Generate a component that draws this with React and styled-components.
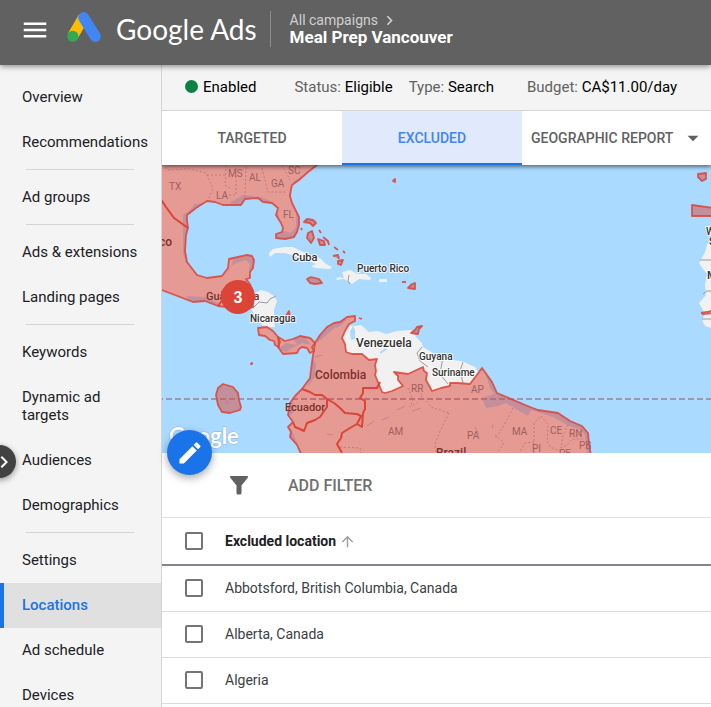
import React, { useState } from 'react';
import styled, { createGlobalStyle } from 'styled-components';
import { MdEdit, MdArrowUpward, MdChevronRight, MdArrowDropDown, MdMenu } from 'react-icons/md';

const navGroups = [
  ['Overview', 'Recommendations'],
  ['Ad groups'],
  ['Ads & extensions', 'Landing pages'],
  ['Keywords', 'Dynamic ad targets', 'Audiences', 'Demographics'],
  ['Settings', 'Locations', 'Ad schedule', 'Devices'],
];

const locations = [
  'Abbotsford, British Columbia, Canada',
  'Alberta, Canada',
  'Algeria',
];

const northAmerica =
  'M-3 -3H158L155 0L146 7L137 15L130 20L129 24L128 31L130 38L134 46L137 52L137 60L135 67L132 72L123 74L114 73L114 69L120 67L121 63L119 58L114 50L116 43L110 38L101 37L96 33L83 34L79 40L61 40L53 37L45 36L34 43L25 50L25 55L26 63L24 70L23 86L25 97L35 110L45 113L60 111L66 103L67 94L85 90L90 91L92 95L91 103L88 107L88 113L84 114L88 119L91 126L91 142L84 145L73 143L56 141L43 136L31 137L18 132L-3 124Z';

const southAmerica =
  'M153 178L158 170L165 162L172 158L178 157L185 152L193 151L193 156L187 159L183 166L180 173L183 179L184 187L190 189L200 189L207 195L215 194L213 200L214 206L213 210L218 222L220 227L223 228L230 226L241 221L236 215L236 211L232 207L246 209L261 202L262 206L265 208L264 215L270 226L279 223L288 221L288 218L295 218L308 219L320 203L330 217L335 228L368 242L376 245L396 248L408 256L420 261L426 268L427 278L429 291H140L135 280L128 272L129 267L126 262L131 257L126 250L128 238L133 231L140 224L148 213L150 197Z';

const costaRica = 'M96 163L105 162L111 166L116 172L117 182L113 180L112 176L108 175L103 171L97 170Z';
const panama = 'M116 172L123 176L131 174L138 171L148 173L153 178L150 182L152 186L148 188L145 183L140 182L137 184L135 188L121 189L116 182L118 177Z';

const whiteLand = [
  'M89 133L93 128L99 125L106 127L112 131L115 136L112 145L112 155L113 162L106 162L100 160L95 153L88 143Z',
  'M180 173L184 163L191 160L188 168L189 175L193 174L193 165L191 161L199 160L207 167L216 166L224 169L235 166L249 165L255 173L260 178L261 182L271 188L277 195L288 195L300 196L313 202L317 208L308 222L288 224L268 230L263 215L259 208L243 222L222 231L211 213L210 197L184 192Z',
  'M107 88L111 84L122 82L131 82L145 89L158 93L164 99L170 102L168 104L153 103L149 101L154 99L139 93L123 88L113 88L108 92Z',
  'M180 107L188 105L196 109L204 109L209 113L208 115L197 114L190 119L182 114L174 115L176 112L182 113Z',
  'M217 114H225V117H217Z',
  'M552 77L545 79L543 87L537 98L541 104L545 109L543 120L544 130L537 138L543 149L540 155L543 161L552 164Z',
];

const shelf = [
  'M25 52L35 45L43 38L33 39L27 46L21 50L21 88L24 98L29 100L27 84L30 70L27 62Z',
  'M67 38L81 30L99 32L108 36L113 45L117 51L114 58L110 42L91 37L80 41Z',
  'M112 76V70L123 66L129 68L134 62V47L138 54L137 73L122 76Z',
  'M129 37L127 29L132 16L155 2L144 11L134 21L131 32Z',
  'M29 139L24 131L44 132L56 138L55 143Z',
  'M90 117L93 97L88 91L71 94L69 103L61 112L70 101L74 98L84 95L88 99L87 107Z',
  'M322 203L328 223L332 229L320 233L324 243L336 241L344 238L359 247L366 251L369 245L391 252L407 261L418 264L423 270L425 290H431L428 267L412 255L397 246L371 241L336 227Z',
  'M116 184L124 187L130 183L140 178L149 180L142 171L131 173L135 180L124 178Z',
  'M126 252L132 247L131 237L127 239ZM128 262L133 273L140 288L135 288L126 269Z',
  'M154 178L160 174L171 164L178 161L186 154L178 155L164 161Z',
  'M149 190L154 199L153 212L145 222L150 207Z',
];

const islands = [
  'M142 57L145 54L151 55L154 58L151 61L148 58ZM146 68L150 66L152 73L149 78L145 73ZM157 65L159 68M156 74L162 76L163 80L158 80ZM161 72L166 76L167 80M172 82L176 85M171 91L176 90L177 94M181 86L183 88M176 96L181 95L179 100L176 99ZM139 63L140 65',
  'M145 114L149 112L157 114L160 118L153 119L148 118Z',
  'M231 16L233 14L233 17ZM240 117L244 117M246 123L250 119L253 118V124Z',
  'M124 151L127 146L128 152L126 155ZM89 199L90 198L90 199Z',
  'M249 168L253 165L255 162L260 161L257 164L256 169Z',
  'M197 153L200 154M539 148L545 147L552 145M540 149L552 148',
  'M536 9L544 8L544 14L540 16L536 12Z',
];

const stateLines =
  'M0 0L6 5L28 4L44 8L48 17L51 24L46 35M45 10H63M64 0L63 20L68 23M63 30H74V2M84 2L83 34M100 3L106 27H124M120 0L128 15M246 223L251 235L248 242L255 238L259 231L269 242L287 248M252 224L262 231M287 248L278 266L273 280L274 288M351 243L341 262L333 274M333 270L342 278L335 288M372 288L372 258L379 251L386 260L385 276L388 282L398 286M372 277L363 278L358 286M408 256L401 270L399 283L405 280L410 274L422 274M407 268L416 270L420 264M178 282L198 283L199 288';

const stateLabels = [
  ['TX', 7, 25], ['MS', 66, 12], ['AL', 87, 16], ['SC', 126, 9], ['GA', 109, 22],
  ['LA', 54, 34], ['FL', 121, 53], ['RR', 249, 227], ['AP', 309, 228], ['AM', 226, 270],
  ['PA', 305, 274], ['MA', 350, 270], ['CE', 388, 269], ['RN', 407, 272], ['PB', 417, 284],
  ['PI', 370, 287], ['PE', 397, 292],
];

function LocationMap() {
  return (
    <MapView viewBox="0 0 549 288" preserveAspectRatio="xMidYMid slice" role="img" aria-label="Map of excluded locations">
      <rect x="-500" y="-200" width="1600" height="700" fill="#aadaff" />
      <g fill="#f1f1f1">
        <path d={northAmerica} />
        <path d={southAmerica} />
        <path d={costaRica} />
        <path d={panama} />
        {whiteLand.map((d) => <path key={d} d={d} />)}
      </g>
      <g fill="#aadaff">
        {shelf.map((d) => <path key={d} d={d} />)}
      </g>
      <path
        d="M91 143L97 137L105 138L108 134L114 131M187 110L186 116L188 119M260 182L255 188L258 196L266 202M281 192L278 209L286 219M301 197L298 206L301 218M538 95H549M541 129L545 126H549M540 154H549"
        fill="none"
        stroke="#9b9b9b"
        strokeWidth="1"
      />
      <path d="M218 188L224 184M192 164L188 167" stroke="#aadaff" strokeWidth="2" />
      <path d="M-500 234H1100" stroke="#9a8da8" strokeWidth="2" strokeDasharray="6 3" opacity=".85" />
      <g fill="#db4437" fillOpacity=".5" stroke="#db4437" strokeOpacity=".85" strokeWidth="1.8" strokeLinejoin="round">
        <path d={northAmerica} />
        <path d={southAmerica} />
        <path d={costaRica} />
        <path d={panama} />
        <path d="M56 223L61 219L71 222L76 228L77 235L79 242L78 245L68 248L60 247L56 240L54 230Z" />
        <path d="M530 40L552 43V51H530Z" />
        {islands.map((d) => <path key={d} d={d} />)}
      </g>
      <path
        d="M-2 33L4 42L12 53L26 63M140 224L148 227L153 230L160 230L165 234L165 242L158 252L153 255L145 258L142 266L138 264L133 262L131 257M165 234L172 238L178 243L183 248L195 249L199 251L195 259L200 262L201 248L203 244V236L198 233L201 228V223L215 223L218 217M195 259L188 263L180 268L179 273L175 279L180 288M56 141L61 134L60 127L63 124L65 120H73L84 117"
        fill="none"
        stroke="#db4437"
        strokeWidth="2"
        strokeLinejoin="round"
      />
      <path d={stateLines} fill="none" stroke="#b96f70" strokeWidth="1" strokeDasharray="2 2" opacity=".75" />
      <path d="M205 261L212 256M220 255L227 252M235 245L243 241M250 246L259 243M330 263L331 260M313 262L317 269M165 269L171 270M153 192L160 190M64 239L65 235L67 238Z" stroke="#c77f8d" strokeWidth="1" fill="none" />
      {stateLabels.map(([name, x, y]) => <StateLabel key={name} x={x} y={y}>{name}</StateLabel>)}
      <RedLabel x="10" y="81" textAnchor="end" $size={12}>Mexico</RedLabel>
      <RedLabel x="44" y="135" $size={11}>Guatemala</RedLabel>
      <RedLabel x="153" y="214" $size={12}>Colombia</RedLabel>
      <RedLabel x="123" y="246" $size={11}>Ecuador</RedLabel>
      <RedLabel x="274" y="292" $size={12}>Brazil</RedLabel>
      <PlaceLabel x="130" y="96" $size={11}>Cuba</PlaceLabel>
      <PlaceLabel x="195" y="107" $size={10}>Puerto Rico</PlaceLabel>
      <PlaceLabel x="88" y="157" $size={10}>Nicaragua</PlaceLabel>
      <PlaceLabel x="194" y="182" $size={12}>Venezuela</PlaceLabel>
      <PlaceLabel x="257" y="195" $size={10}>Guyana</PlaceLabel>
      <PlaceLabel x="270" y="211" $size={10}>Suriname</PlaceLabel>
      <PlaceLabel x="544" y="70" $size={10}>Western</PlaceLabel>
      <PlaceLabel x="547" y="80" $size={10}>Sahara</PlaceLabel>
      <PlaceLabel x="545" y="114" $size={11}>Mauritania</PlaceLabel>
      <circle cx="76" cy="132" r="17" fill="#db4437" />
      <ClusterCount x="76" y="138" textAnchor="middle">3</ClusterCount>
      <Watermark x="7" y="279">Google</Watermark>
    </MapView>
  );
}

const App = () => {
  const [active, setActive] = useState('Locations');
  const [tab, setTab] = useState('Excluded');
  const [checked, setChecked] = useState([]);

  const toggle = (name) => {
    setChecked(checked.includes(name) ? checked.filter((n) => n !== name) : [...checked, name]);
  };

  const toggleAll = () => {
    setChecked(checked.length === locations.length ? [] : locations);
  };

  return (
    <Page>
      <GlobalStyle />
      <Header>
        <MenuButton aria-label="Menu"><MdMenu size={30} /></MenuButton>
        <Brand href="#">
          <svg width="34" height="30" viewBox="0 0 34 30" aria-hidden="true">
            <path d="M5.500 24.500L16.500 5.500" stroke="#fbbc04" strokeWidth="11" />
            <path d="M16.700 5.600L28.300 24.500" stroke="#4285f4" strokeWidth="11" strokeLinecap="round" />
            <circle cx="5.800" cy="24.300" r="5.600" fill="#34a853" />
          </svg>
          <BrandName>Google Ads</BrandName>
        </Brand>
        <Crumbs>
          <CrumbLink href="#">All campaigns <MdChevronRight size={19} /></CrumbLink>
          <Campaign>Meal Prep Vancouver</Campaign>
        </Crumbs>
      </Header>
      <Body>
        <Sidebar>
          {navGroups.map((group) => (
            <NavGroup key={group[0]}>
              {group.map((name) => (
                <NavItem key={name}>
                  <NavLink href="#" $active={name === active} onClick={() => setActive(name)}>{name}</NavLink>
                </NavItem>
              ))}
            </NavGroup>
          ))}
        </Sidebar>
        <Expander aria-label="Expand navigation"><MdChevronRight size={24} /></Expander>
        <Main>
          <StatusBar>
            <Enabled><Dot />Enabled</Enabled>
            <Status $gap={38}><span>Status:</span> Eligible</Status>
            <Status $gap={16}><span>Type:</span> Search</Status>
            <Status $gap={33}><span>Budget:</span> CA$11.00/day</Status>
          </StatusBar>
          <Tabs>
            <Tab $active={tab === 'Targeted'} onClick={() => setTab('Targeted')}>Targeted</Tab>
            <Tab $active={tab === 'Excluded'} onClick={() => setTab('Excluded')}>Excluded</Tab>
            <ReportTab>Geographic report <MdArrowDropDown size={26} /></ReportTab>
          </Tabs>
          <MapArea>
            <LocationMap />
            <EditButton aria-label="Edit excluded locations"><MdEdit size={28} /></EditButton>
          </MapArea>
          <FilterBar>
            <svg width="18" height="19" viewBox="0 0 18 19" aria-hidden="true">
              <path d="M0.500 0H17.500Q18.500 1 17.500 2L11.500 9.500V17Q11.500 18.500 10 18.500H8Q6.500 18.500 6.500 17V9.500L0.500 2Q-0.500 1 0.500 0Z" fill="#616161" />
            </svg>
            <FilterButton>Add filter</FilterButton>
          </FilterBar>
          <Table>
            <thead>
              <tr>
                <HeadCell $check>
                  <Checkbox type="checkbox" aria-label="Select all" checked={checked.length === locations.length} onChange={toggleAll} />
                </HeadCell>
                <HeadCell>
                  <SortButton>Excluded location <MdArrowUpward size={17} /></SortButton>
                </HeadCell>
              </tr>
            </thead>
            <tbody>
              {locations.map((name, i) => (
                <tr key={name}>
                  <Cell $check>
                    <Checkbox type="checkbox" id={`loc-${i}`} checked={checked.includes(name)} onChange={() => toggle(name)} />
                  </Cell>
                  <Cell><label htmlFor={`loc-${i}`}>{name}</label></Cell>
                </tr>
              ))}
            </tbody>
          </Table>
        </Main>
      </Body>
    </Page>
  );
};

const GlobalStyle = createGlobalStyle`
  * {
    box-sizing: border-box;
  }
  body {
    margin: 0;
    font-family: Roboto, "Liberation Sans", sans-serif;
    color: #202124;
    background: #fff;
  }
  button {
    font: inherit;
    border: none;
    background: none;
    padding: 0;
    cursor: pointer;
  }
  a {
    color: inherit;
    text-decoration: none;
  }
`

const Page = styled.div`
  height: 100vh;
  display: flex;
  flex-direction: column;
  overflow: hidden;
`

const Header = styled.header`
  display: flex;
  flex: none;
  height: 65px;
  padding: 0 20px;
  background: #616161;
  color: #fff;
  box-shadow: 0 1px 6px rgba(0, 0, 0, 0.5);
  z-index: 3;
`

const MenuButton = styled.button`
  display: flex;
  align-items: center;
  height: 59px;
  color: #fff;
`

const Brand = styled.a`
  display: flex;
  align-items: center;
  height: 54px;
  margin-left: 17px;
`

const BrandName = styled.span`
  margin-left: 15px;
  font-family: Lato, sans-serif;
  font-size: 28px;
  line-height: 32px;
  padding-top: 4px;
`

const Crumbs = styled.nav`
  margin: 11px 0 0 13px;
  height: 36px;
  padding-left: 19px;
  border-left: 1px solid #8d8d8d;
  display: flex;
  flex-direction: column;
`

const CrumbLink = styled.a`
  display: flex;
  align-items: center;
  gap: 2px;
  font-size: 14px;
  line-height: 18px;
  height: 18px;
  color: #d0d0d0;
`

const Campaign = styled.strong`
  font-size: 17px;
  line-height: 17px;
  font-weight: 700;
  white-space: nowrap;
`

const Body = styled.div`
  flex: 1;
  min-height: 0;
  display: flex;
  position: relative;
`

const Sidebar = styled.nav`
  flex: none;
  width: 162px;
  padding-top: 10px;
  background: #f4f4f4;
  border-right: 1px solid #d5d5d5;
  overflow: hidden;
`

const NavGroup = styled.ul`
  list-style: none;
  margin: 0;
  padding: 0;

  & + &::before {
    content: '';
    display: block;
    height: 1px;
    margin: 4px 27px 5px 26px;
    background: #d5d5d5;
  }
`

const NavItem = styled.li`
  display: block;
`

const NavLink = styled.a`
  display: block;
  padding: 13px 12px 14px 18px;
  border-left: 4px solid ${(p) => (p.$active ? '#1a73e8' : 'transparent')};
  background: ${(p) => (p.$active ? '#e0e0e0' : 'none')};
  color: ${(p) => (p.$active ? '#1a73e8' : '#202124')};
  font-size: 15px;
  line-height: 18px;
  font-weight: ${(p) => (p.$active ? 500 : 400)};
`

const Expander = styled.button`
  position: absolute;
  left: -17px;
  top: 380px;
  width: 33px;
  height: 33px;
  border-radius: 50%;
  background: #424242;
  color: #fff;
  box-shadow: 0 2px 6px rgba(0, 0, 0, 0.4);
  display: flex;
  align-items: center;
  justify-content: flex-end;
  z-index: 2;
`

const Main = styled.main`
  flex: 1;
  min-width: 0;
`

const StatusBar = styled.div`
  display: flex;
  align-items: center;
  height: 46px;
  padding: 0 23px 2px;
  background: #f4f4f4;
  border-bottom: 1px solid #d5d5d5;
  font-size: 15px;
  color: #000;
  white-space: nowrap;
`

const Enabled = styled.div`
  display: flex;
  align-items: center;
  gap: 5px;
`

const Dot = styled.span`
  width: 13px;
  height: 13px;
  border-radius: 50%;
  background: #0b8043;
`

const Status = styled.div`
  margin-left: ${(p) => p.$gap}px;

  span {
    color: #616161;
  }
`

const Tabs = styled.div`
  display: flex;
  height: 54px;
  position: relative;
  background: #fff;
  box-shadow: 0 2px 4px rgba(0, 0, 0, 0.5);
  clip-path: inset(0 0 -8px 0);
  z-index: 1;
`

const Tab = styled.button`
  width: 180px;
  font-size: 14px;
  font-weight: 500;
  text-transform: uppercase;
  padding-top: 2px;
  background: ${(p) => (p.$active ? '#e1e9fd' : '#fff')};
  color: ${(p) => (p.$active ? '#4285f4' : '#616161')};
  border-bottom: 2px solid ${(p) => (p.$active ? '#1a73e8' : 'transparent')};
`

const ReportTab = styled(Tab)`
  flex: 1;
  display: flex;
  align-items: center;
  justify-content: space-between;
  padding: 2px 5px 0 9px;
  white-space: nowrap;
`

const MapArea = styled.div`
  position: relative;
  height: 288px;
`

const MapView = styled.svg`
  display: block;
  width: 100%;
  height: 100%;
`

const StateLabel = styled.text`
  font-size: 10px;
  fill: #a0605f;
`

const RedLabel = styled.text`
  font-size: ${(p) => p.$size}px;
  font-weight: 500;
  fill: #7b302c;
`

const PlaceLabel = styled.text`
  font-size: ${(p) => p.$size}px;
  font-weight: 500;
  fill: #333;
  stroke: #fff;
  stroke-width: 2px;
  stroke-opacity: 0.8;
  paint-order: stroke;
`

const ClusterCount = styled.text`
  font-family: "Liberation Sans", sans-serif;
  font-size: 16px;
  font-weight: 700;
  fill: #fff;
`

const Watermark = styled.text`
  font-family: Lato, sans-serif;
  font-size: 22px;
  font-weight: 700;
  fill: #fff;
  stroke: #8fb4d0;
  stroke-width: 1px;
  paint-order: stroke;
`

const EditButton = styled.button`
  position: absolute;
  left: 5px;
  bottom: -22px;
  width: 45px;
  height: 45px;
  border-radius: 50%;
  background: #1a73e8;
  color: #fff;
  box-shadow: 0 3px 9px rgba(0, 0, 0, 0.35);
  display: flex;
  align-items: center;
  justify-content: center;
`

const FilterBar = styled.div`
  display: flex;
  align-items: center;
  gap: 40px;
  height: 65px;
  padding-left: 68px;
  border-bottom: 1px solid #e0e0e0;
`

const FilterButton = styled.button`
  font-size: 16px;
  font-weight: 500;
  text-transform: uppercase;
  color: #707070;
`

const Table = styled.table`
  width: 100%;
  border-collapse: separate;
  border-spacing: 0;
  font-size: 14px;
`

const Cell = styled.td`
  height: 46px;
  width: ${(p) => (p.$check ? '63px' : 'auto')};
  padding: 0 0 2px ${(p) => (p.$check ? '23px' : '0')};
  border-bottom: 1px solid #dadce0;
  color: #3c4043;
`

const HeadCell = styled.th`
  height: 48px;
  width: ${(p) => (p.$check ? '63px' : 'auto')};
  padding: 0 0 0 ${(p) => (p.$check ? '23px' : '0')};
  border-bottom: 2px solid #80868b;
  text-align: left;
`

const Checkbox = styled.input`
  appearance: none;
  display: block;
  width: 18px;
  height: 18px;
  margin: 0;
  border: 2px solid #757575;
  border-radius: 2px;
  background: ${(p) => (p.checked ? '#1a73e8' : '#fff')};
`

const SortButton = styled.button`
  display: flex;
  align-items: center;
  gap: 3px;
  font-weight: 700;
  color: #202124;

  svg {
    color: #9e9e9e;
  }
`

export default App;
